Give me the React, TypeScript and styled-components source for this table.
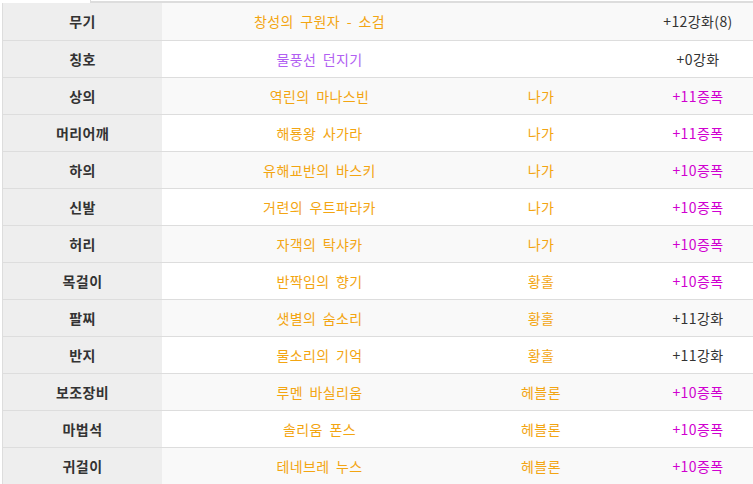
import React from 'react';
import styled, { createGlobalStyle } from 'styled-components';

const GlobalStyle = createGlobalStyle`
    html, body {
        margin: 0;
        padding: 0;
        background: #fff;
        overflow: hidden;
    }
    body {
        font-family: 'Noto Sans CJK KR', 'Noto Sans', sans-serif;
        font-size: 14px;
        color: #333;
    }
`;

type Tone = 'rare' | 'title' | 'amp' | 'plain';

interface Equip {
    slot: string;
    name: string;
    tone: Tone;
    set?: string;
    upgrade: string;
    upTone: Tone;
}

const ITEMS: Equip[] = [
    { slot: '무기', name: '창성의 구원자 - 소검', tone: 'rare', upgrade: '+12강화(8)', upTone: 'plain' },
    { slot: '칭호', name: '물풍선 던지기', tone: 'title', upgrade: '+0강화', upTone: 'plain' },
    { slot: '상의', name: '역린의 마나스빈', tone: 'rare', set: '나가', upgrade: '+11증폭', upTone: 'amp' },
    { slot: '머리어깨', name: '해룡왕 사가라', tone: 'rare', set: '나가', upgrade: '+11증폭', upTone: 'amp' },
    { slot: '하의', name: '유해교반의 바스키', tone: 'rare', set: '나가', upgrade: '+10증폭', upTone: 'amp' },
    { slot: '신발', name: '거련의 우트파라카', tone: 'rare', set: '나가', upgrade: '+10증폭', upTone: 'amp' },
    { slot: '허리', name: '자객의 탁샤카', tone: 'rare', set: '나가', upgrade: '+10증폭', upTone: 'amp' },
    { slot: '목걸이', name: '반짝임의 향기', tone: 'rare', set: '황홀', upgrade: '+10증폭', upTone: 'amp' },
    { slot: '팔찌', name: '샛별의 숨소리', tone: 'rare', set: '황홀', upgrade: '+11강화', upTone: 'plain' },
    { slot: '반지', name: '물소리의 기억', tone: 'rare', set: '황홀', upgrade: '+11강화', upTone: 'plain' },
    { slot: '보조장비', name: '루멘 바실리움', tone: 'rare', set: '헤블론', upgrade: '+10증폭', upTone: 'amp' },
    { slot: '마법석', name: '솔리움 폰스', tone: 'rare', set: '헤블론', upgrade: '+10증폭', upTone: 'amp' },
    { slot: '귀걸이', name: '테네브레 누스', tone: 'rare', set: '헤블론', upgrade: '+10증폭', upTone: 'amp' },
];

const TONE_COLORS: Record<Tone, string> = {
    plain: '#333',
    rare: '#f3a512',
    title: '#b160f2',
    amp: '#d000d0',
};

const Page = styled.div`
    width: 753px;
    height: 484px;
    padding-left: 2px;
    box-sizing: border-box;
    overflow: hidden;
`;

const TopCap = styled.div`
    display: flex;
    height: 3px;
`;

const CapTab = styled.div`
    width: 88px;
    border-right: 1px solid #ddd;
    background: #fff;
`;

const CapLine = styled.div`
    flex: 1;
    margin-top: 1px;
    border-top: 2px solid #ddd;
`;

const Table = styled.table`
    border-collapse: collapse;
    table-layout: fixed;
    width: 788px;
    border-left: 1px solid #ddd;
`;

const Row = styled.tr<{ $striped: boolean }>`
    height: 37px;
    border-bottom: 1px solid #ddd;
    background: ${({ $striped }) => ($striped ? '#f9f9f9' : '#fff')};
`;

const SlotCell = styled.th`
    width: 159px;
    padding: 0;
    background: #eee;
    font-weight: 700;
    color: #333;
    text-align: center;
    letter-spacing: 0.4px;
`;

const Cell = styled.td<{ $tone: Tone; $width: number }>`
    width: ${({ $width }) => $width}px;
    padding: 0;
    text-align: center;
    color: ${({ $tone }) => TONE_COLORS[$tone]};
    white-space: nowrap;
    letter-spacing: 0.4px;
    word-spacing: 3px;
`;

export default function App() {
    return (
        <Page>
            <GlobalStyle />
            <TopCap>
                <CapTab />
                <CapLine />
            </TopCap>
            <Table>
                <tbody>
                    {ITEMS.map((item, i) => (
                        <Row key={item.slot} $striped={i % 2 === 0}>
                            <SlotCell>{item.slot}</SlotCell>
                            <Cell $tone={item.tone} $width={315}>
                                {item.name}
                            </Cell>
                            <Cell $tone="rare" $width={128}>
                                {item.set ?? ''}
                            </Cell>
                            <Cell $tone={item.upTone} $width={186}>
                                {item.upgrade}
                            </Cell>
                        </Row>
                    ))}
                </tbody>
            </Table>
        </Page>
    );
}
